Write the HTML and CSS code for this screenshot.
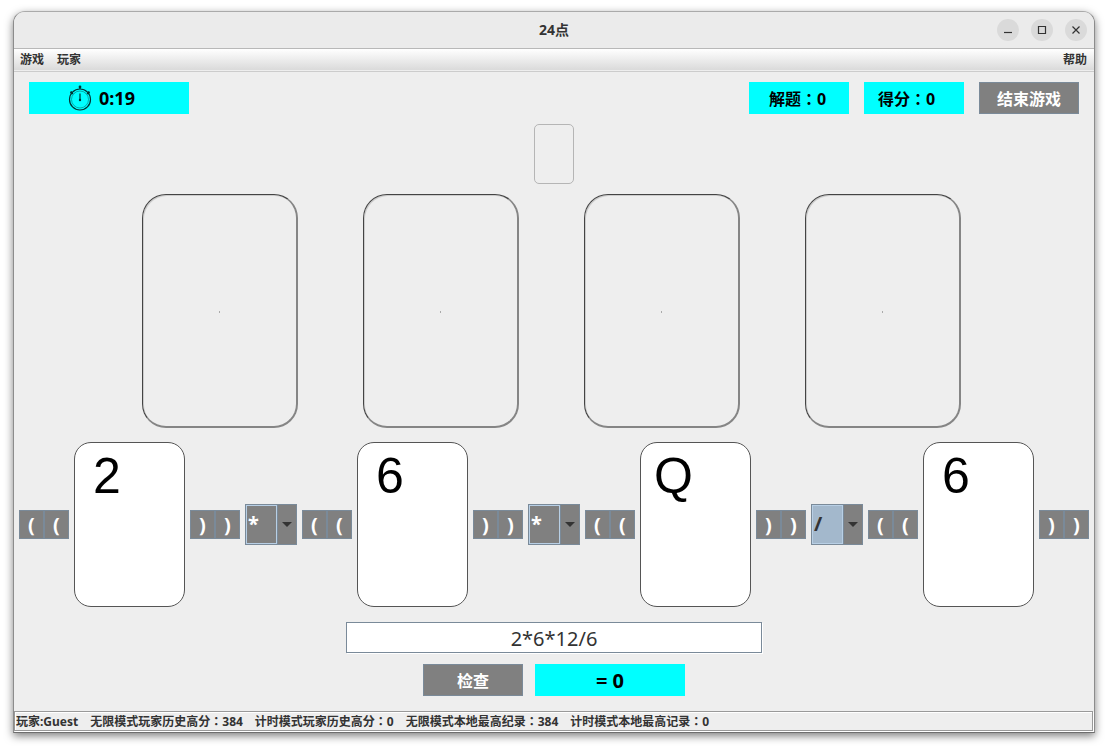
FILE: index.html
```html
<!DOCTYPE html>
<html lang="zh">
<head>
<meta charset="utf-8">
<title>24点</title>
<link rel="stylesheet" href="styles.css">
</head>
<body>
<div class="window">
  <header class="titlebar">
    <h1 class="title">24点</h1>
    <div class="controls">
      <button class="control" aria-label="最小化"><svg width="22" height="22"><path d="M7 13.5h8"/></svg></button>
      <button class="control" aria-label="最大化"><svg width="22" height="22"><path d="M7.5 7.5h7v7h-7z"/></svg></button>
      <button class="control" aria-label="关闭"><svg width="22" height="22"><path d="M7.5 7.5l7 7M14.5 7.5l-7 7"/></svg></button>
    </div>
  </header>
  <nav class="menubar">
    <button class="menu">游戏</button>
    <button class="menu">玩家</button>
    <button class="menu menu-help">帮助</button>
  </nav>
  <main class="game">
    <div class="toolbar">
      <div class="badge timer">
        <svg class="watch" width="24" height="28" viewBox="0 0 24 28">
          <circle cx="12" cy="15.500" r="10.5"/>
          <circle cx="12" cy="15.500" r="8.5" class="thin"/>
          <path d="M12 9.500v6.500M12 3v2M3 8l2 2M21 8l-2 2"/>
          <circle cx="12" cy="3" r=".8" class="dot"/>
          <circle cx="12" cy="16" r=".6" class="dot"/>
          <circle cx="3.300" cy="8.500" r=".6" class="dot"/>
          <circle cx="20.700" cy="8.500" r=".6" class="dot"/>
        </svg>
        <span>0:19</span>
      </div>
      <div class="badge solved">解题：0</div>
      <div class="badge score">得分：0</div>
      <button class="action">结束游戏</button>
    </div>
    <div class="deck"></div>
    <div class="slots">
      <div class="slot"></div><div class="slot"></div><div class="slot"></div><div class="slot"></div>
    </div>
    <div class="formula">
      <div class="parens"><button class="paren">(</button><button class="paren">(</button></div>
      <div class="card">2</div>
      <div class="parens"><button class="paren">)</button><button class="paren">)</button></div>
      <div class="operator"><select class="op" aria-label="运算符 1"><option>+</option><option>-</option><option selected>*</option><option>/</option></select></div>
      <div class="parens"><button class="paren">(</button><button class="paren">(</button></div>
      <div class="card">6</div>
      <div class="parens"><button class="paren">)</button><button class="paren">)</button></div>
      <div class="operator"><select class="op" aria-label="运算符 2"><option>+</option><option>-</option><option selected>*</option><option>/</option></select></div>
      <div class="parens"><button class="paren">(</button><button class="paren">(</button></div>
      <div class="card card-wide">Q</div>
      <div class="parens"><button class="paren">)</button><button class="paren">)</button></div>
      <div class="operator active"><select class="op" aria-label="运算符 3"><option>+</option><option>-</option><option>*</option><option selected>/</option></select></div>
      <div class="parens"><button class="paren">(</button><button class="paren">(</button></div>
      <div class="card">6</div>
      <div class="parens"><button class="paren">)</button><button class="paren">)</button></div>
    </div>
    <input class="expression" type="text" value="2*6*12/6" aria-label="算式">
    <div class="check">
      <button class="action">检查</button>
      <output class="badge result">= 0</output>
    </div>
  </main>
  <footer class="status">
    <span>玩家:Guest</span>
    <span>无限模式玩家历史高分：384</span>
    <span>计时模式玩家历史高分：0</span>
    <span>无限模式本地最高纪录：384</span>
    <span>计时模式本地最高记录：0</span>
  </footer>
</div>
</body>
</html>
```

FILE: styles.css
```css
* { box-sizing: border-box; }

body {
  margin: 0;
  min-height: 100vh;
  padding: 11px 13px 16px;
  display: flex;
  background: #fff;
  color: #333;
  font: bold 12px/16px "Noto Sans", "Noto Sans CJK JP", sans-serif;
  font-feature-settings: "locl" 0;
}

button, input, select, output { font: inherit; color: inherit; margin: 0; padding: 0; }
button { border: 0; background: none; font-feature-settings: inherit; }

.window {
  flex: 1;
  display: flex;
  flex-direction: column;
  min-width: 0;
  border: 1px solid #8c8c8c;
  border-top-color: #aaa;
  border-bottom-color: #6e6e6e;
  border-radius: 12px 12px 0 0;
  background: #eee;
  box-shadow: 0 3px 9px rgba(0, 0, 0, .5);
}

.titlebar {
  display: grid;
  grid-template-columns: 1fr auto 1fr;
  align-items: center;
  height: 37px;
  padding: 0 7px;
  border-bottom: 1px solid #b8b8b8;
  border-radius: 11px 11px 0 0;
  background: #ebebeb;
}
.title { grid-column: 2; margin: 0; font-size: 14px; line-height: 18px; }
.controls { display: flex; justify-content: flex-end; gap: 12px; }
.control { width: 22px; height: 22px; border-radius: 50%; background: #dadada; }
.control svg { display: block; fill: none; stroke: #333; stroke-width: 1.2; }

.menubar {
  display: flex;
  gap: 13px;
  height: 23px;
  padding: 0 7px 0 6px;
  border-bottom: 1px solid #ccc;
  background: linear-gradient(#fff, #dadada 21px, #eee 21px);
}
.menu { height: 21px; }
.menu-help { margin-left: auto; }

.game { flex: 1; display: flex; flex-direction: column; align-items: center; padding-top: 10px; }

.toolbar { align-self: stretch; display: flex; gap: 15px; padding: 0 15px; }
.badge {
  display: flex;
  align-items: center;
  justify-content: center;
  width: 100px;
  height: 32px;
  padding-top: 2px;
  background: #0ff;
  color: #000;
  font-size: 16px;
  line-height: 24px;
}
.timer { justify-content: flex-start; gap: 7px; width: 160px; margin-right: auto; padding: 0 0 0 39px; font-size: 18px; }
.watch { fill: none; stroke: #033; stroke-width: 1.2; }
.watch .thin { stroke: #077; stroke-width: .6; }
.watch .dot { fill: #033; }
.solved { padding-right: 3px; }
.score { justify-content: flex-start; padding-left: 14px; }
.action {
  width: 100px;
  height: 32px;
  padding-top: 2px;
  border: 1px solid #7a8a99;
  background: #808080;
  color: #fff;
  font-size: 16px;
  line-height: 24px;
}

.deck { width: 40px; height: 60px; margin: 10px 0; border: 1px solid #b5b5b5; border-radius: 5px; }

.slots { display: flex; gap: 65px; padding-right: 5px; }
.slot {
  display: grid;
  place-items: center;
  width: 156px;
  height: 234px;
  padding-top: 3px;
  border: 1px solid #444;
  border-right: 2px solid #858585;
  border-bottom: 2px solid #858585;
  border-radius: 24px;
  box-shadow: inset 1px 1px #ccc;
}
.slot::before { content: ""; width: 1px; height: 2px; background: #aaa; }

.formula { display: flex; align-items: center; gap: 5px; margin: 14px 0 15px; }
.parens { display: flex; }
.paren {
  width: 25px;
  height: 29px;
  border: 1px solid #7a8a99;
  background: #808080;
  color: #fff;
  font-size: 20px;
  line-height: 27px;
}
.card {
  width: 111px;
  height: 165px;
  padding: 4px 0 0 18px;
  border: 1px solid #555;
  border-radius: 17px;
  background: #fff;
  color: #000;
  font: 50px/58px "Liberation Sans", sans-serif;
}
.card-wide { padding-left: 13px; }

.operator { position: relative; width: 52px; height: 41px; color: #fff; }
.op {
  appearance: none;
  display: block;
  width: 100%;
  height: 100%;
  padding: 0 0 2px 2px;
  border: 1px solid #7a8a99;
  border-radius: 0;
  background: linear-gradient(90deg, transparent 31px, #7a8a99 31px, #7a8a99 32px, transparent 32px) #808080;
  font-size: 20px;
}
.operator::before {
  content: "";
  position: absolute;
  inset: 1px 20px 1px 1px;
  border: 1px solid #b8cfe5;
  pointer-events: none;
}
.operator::after {
  content: "";
  position: absolute;
  top: 18px;
  right: 5px;
  border: 5px solid transparent;
  border-top-color: #333;
  border-bottom: 0;
  pointer-events: none;
}
.active { color: #333; }
.active .op { background: linear-gradient(90deg, #a3b8cc 31px, #7a8a99 31px, #7a8a99 32px, #808080 32px); }

.expression {
  width: 416px;
  height: 31px;
  padding-top: 2px;
  border: 1px solid #7a8a99;
  background: #fff;
  box-shadow: 1px 1px #fff;
  font-size: 20px;
  font-weight: normal;
  text-align: center;
}
.check { display: flex; gap: 12px; margin: 11px 0 15px; }
.result { width: 150px; font-size: 20px; }

.status {
  display: flex;
  gap: 12px;
  height: 20px;
  margin-right: 1px;
  margin-bottom: 1px;
  padding-left: 1px;
  border: 1px solid #999;
  box-shadow: inset 1px 1px #fff, 1px 1px #fff;
  line-height: 20px;
}
```
